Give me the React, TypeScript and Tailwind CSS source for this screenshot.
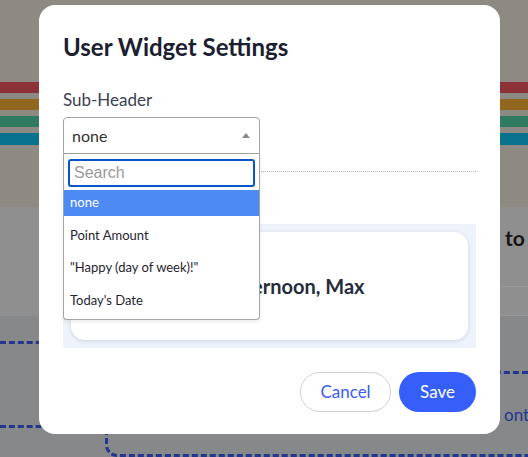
const options = ["none", "Point Amount", "\"Happy (day of week)!\"", "Today's Date"];

const Backdrop = () => (
  <div className="flex h-full flex-col">
    <div className="flex h-[207px] flex-col gap-[6px] bg-[#8d8a84] pt-[82px]">
      <div className="h-[11px] bg-[#8c3137]" />
      <div className="h-[11px] bg-[#93671f]" />
      <div className="h-[11px] bg-[#317a62]" />
      <div className="h-[12px] bg-[#08728f]" />
    </div>
    <div className="flex h-[109px] justify-end bg-[#8f8f8f]">
      <div className="flex w-[40px] flex-col">
        <div className="h-[82px] overflow-hidden whitespace-nowrap border-b border-[#9a9a9a] pl-[17px] pt-[15px] font-['Lato',sans-serif] text-[21px] font-bold text-[#151515]">
          to <span className="text-[#5e5e5e]">m</span>
        </div>
        <div className="h-[30px] border-b border-[#999]" />
      </div>
    </div>
    <div className="flex flex-1 items-start bg-[#878889]">
      <div className="mt-[25px] h-[87px] w-[95px] border-y-[3px] border-dashed border-[#24378f]" />
      <div className="ml-[10px] mt-[55px] flex h-[86px] flex-1 justify-end rounded-bl-[12px] border-b-[3px] border-l-[3px] border-t-[3px] border-dashed border-[#24378f] pt-[28px] font-['Lato',sans-serif] text-[17px] text-[#24378f]">
        <span className="w-[24px] overflow-hidden whitespace-nowrap">onte</span>
      </div>
    </div>
  </div>
);

const App = () => {
  return (
    <div className="relative h-[457px] w-[528px] overflow-hidden font-['Lato',sans-serif]">
      <Backdrop />

      <div className="absolute left-[39px] top-[5px] flex h-[429px] w-[461px] flex-col rounded-[16px] bg-white px-[24px] pt-[27px]">
        <h2 className="text-[24px] font-bold leading-[30px] text-[#1b2030]">User Widget Settings</h2>

        <div className="mt-[26px] border-b border-dotted border-[#b5b5b5] pb-[17px]">
          <label className="block text-[17px] leading-[24px] text-[#3a4152]">Sub-Header</label>
          <div className="relative mt-[5px] w-[197px]">
            <div className="flex h-[37px] items-center justify-between rounded-t-[4px] border border-[#a3a3a3] pl-[8px] pr-[9px] text-[16px] text-[#333]">
              <span>none</span>
              <svg width="8" height="5" viewBox="0 0 8 5">
                <path d="M0 5 L4 0 L8 5 Z" fill="#8a8a8a" />
              </svg>
            </div>
            <div className="absolute left-0 top-[37px] z-10 w-[197px] rounded-b-[4px] border border-t-0 border-[#a3a3a3] bg-white pb-[5px] shadow-[0_2px_4px_rgba(0,0,0,0.08)]">
              <div className="px-[4px] pb-[3px] pt-[5px]">
                <input
                  readOnly
                  placeholder="Search"
                  className="h-[28px] w-full rounded-[3px] border-2 border-[#0a55c6] px-[4px] font-['Liberation_Sans',sans-serif] text-[16px] text-[#333] outline-none placeholder:text-[#9a9a9a]"
                />
              </div>
              <ul className="flex flex-col gap-[6.5px] text-[13px] text-[#1f2430]">
                {options.map((o, i) => (
                  <li
                    key={o}
                    className={
                      i === 0
                        ? "flex h-[26px] items-center bg-[#4e8af3] px-[6px] text-white"
                        : "flex h-[26px] items-center px-[6px]"
                    }
                  >
                    {o}
                  </li>
                ))}
              </ul>
            </div>
          </div>
        </div>

        <div className="mt-[52px] bg-[#eef2fb] p-[8px]">
          <div className="flex h-[108px] items-center justify-center rounded-[14px] bg-white shadow-[0_1px_4px_rgba(30,40,80,0.14)]">
            <span className="text-[20px] font-bold text-[#262c3c]">Good afternoon, Max</span>
          </div>
        </div>

        <div className="mt-[24px] flex justify-end gap-[8px]">
          <button className="h-[40px] w-[91px] rounded-full border border-[#cdd0d8] text-[17px] text-[#3b5cf6]">
            Cancel
          </button>
          <button className="h-[40px] w-[77px] rounded-full bg-[#365ffa] text-[17px] text-white">
            Save
          </button>
        </div>
      </div>
    </div>
  );
};

export default App;
